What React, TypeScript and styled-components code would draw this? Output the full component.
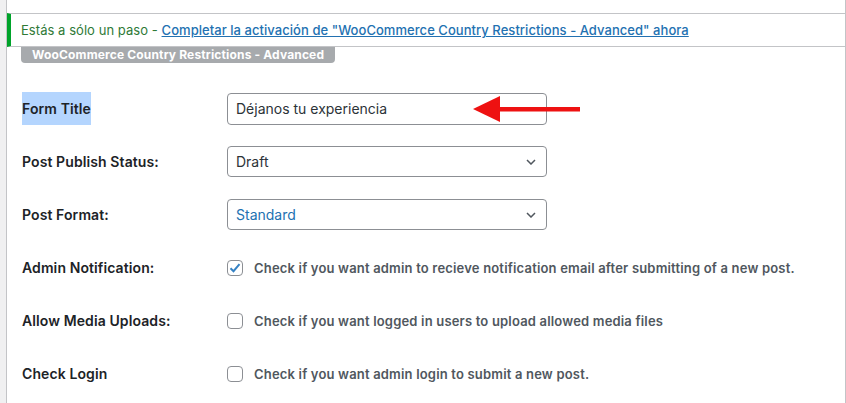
import React from "react";
import styled, { createGlobalStyle } from "styled-components";

const Global = createGlobalStyle`
  html, body { margin: 0; padding: 0; background: #f0f0f1; }
  body { font-family: Inter, "Noto Sans", sans-serif; -webkit-font-smoothing: antialiased; }
  * { box-sizing: border-box; }
`;

const Page = styled.div`
  padding-left: 6px;
  height: 403px;
  overflow: hidden;
`;

const Panel = styled.div`
  background: #fff;
  border-left: 1px solid #c3c4c7;
  border-right: 1px solid #c3c4c7;
  height: 100%;
  padding-top: 13px;
`;

const Notice = styled.div`
  border-top: 1px solid #c3c4c7;
  border-bottom: 1px solid #c3c4c7;
  border-left: 4px solid #00a32a;
  padding: 7px 10px;
  font-size: 13px;
  line-height: 18px;
  color: #2f7a37;
  letter-spacing: 0.05px;
`;

const NoticeLink = styled.a`
  color: #2271b1;
  text-decoration: underline;
  font-weight: 500;
`;

const Badge = styled.div`
  width: fit-content;
  margin-left: 14px;
  background: #a7aaad;
  color: #fff;
  font-weight: 700;
  font-size: 12px;
  letter-spacing: 0.15px;
  line-height: 16px;
  padding: 0 11px;
  border-radius: 0 0 4px 4px;
`;

const Form = styled.div`
  margin-top: 19px;
  padding-left: 15px;
  display: flex;
  flex-direction: column;
`;

const Row = styled.div`
  display: grid;
  grid-template-columns: 205px 1fr;
  align-items: center;
  height: 53px;
`;

const Label = styled.div`
  font-size: 14px;
  font-weight: 600;
  color: #1d2327;
  letter-spacing: 0.1px;
`;

const Highlight = styled.span`
  display: inline-block;
  background: #b4d5fe;
  line-height: 33px;
`;

const Field = styled.div`
  position: relative;
  display: flex;
  align-items: center;
`;

const TextBox = styled.div`
  width: 320px;
  height: 32px;
  border: 1px solid #8c8f94;
  border-radius: 4px;
  padding: 0 8px;
  display: flex;
  align-items: center;
  font-size: 14px;
  color: #2c3338;
`;

const SelectBox = styled(TextBox)<{ $accent?: boolean }>`
  height: 31px;
  justify-content: space-between;
  color: ${(p) => (p.$accent ? "#2271b1" : "#2c3338")};
  padding-right: 10px;
`;

const Box = styled.span`
  width: 16px;
  height: 16px;
  border: 1px solid #8c8f94;
  border-radius: 4px;
  display: inline-flex;
  align-items: center;
  justify-content: center;
  margin-right: 11px;
  flex-shrink: 0;
`;

const Desc = styled.span`
  font-size: 13px;
  font-weight: 600;
  color: #50575e;
  letter-spacing: 0.18px;
`;

const Arrow = styled.svg`
  position: absolute;
  left: 246px;
  top: 50%;
  margin-top: -13px;
`;

const Chevron = () => (
  <svg width="10" height="6" viewBox="0 0 10 6">
    <path d="M1 1l4 4 4-4" fill="none" stroke="#50575e" strokeWidth="1.5" />
  </svg>
);

const Check = () => (
  <svg width="14" height="14" viewBox="0 0 14 14">
    <path d="M2.5 7.2l3 3 6-7" fill="none" stroke="#3582c4" strokeWidth="2" />
  </svg>
);

const checks = [
  { label: "Admin Notification:", text: "Check if you want admin to recieve notification email after submitting of a new post.", checked: true },
  { label: "Allow Media Uploads:", text: "Check if you want logged in users to upload allowed media files", checked: false },
  { label: "Check Login", text: "Check if you want admin login to submit a new post.", checked: false },
];

export default function App() {
  return (
    <Page>
      <Global />
      <Panel>
        <Notice>
          Estás a sólo un paso -{" "}
          <NoticeLink href="#">Completar la activación de "WooCommerce Country Restrictions - Advanced" ahora</NoticeLink>
        </Notice>
        <Badge>WooCommerce Country Restrictions - Advanced</Badge>
        <Form>
          <Row>
            <Label>
              <Highlight>Form Title</Highlight>
            </Label>
            <Field>
              <TextBox>Déjanos tu experiencia</TextBox>
              <Arrow width="108" height="26" viewBox="0 0 108 26">
                <polygon points="0,13 27,0 27,26" fill="#ee1111" />
                <rect x="26" y="11" width="81" height="4.5" fill="#ee1111" />
              </Arrow>
            </Field>
          </Row>
          <Row>
            <Label>Post Publish Status:</Label>
            <Field>
              <SelectBox>
                Draft
                <Chevron />
              </SelectBox>
            </Field>
          </Row>
          <Row>
            <Label>Post Format:</Label>
            <Field>
              <SelectBox $accent>
                Standard
                <Chevron />
              </SelectBox>
            </Field>
          </Row>
          {checks.map((c) => (
            <Row key={c.label}>
              <Label>{c.label}</Label>
              <Field>
                <Box>{c.checked && <Check />}</Box>
                <Desc>{c.text}</Desc>
              </Field>
            </Row>
          ))}
        </Form>
      </Panel>
    </Page>
  );
}
